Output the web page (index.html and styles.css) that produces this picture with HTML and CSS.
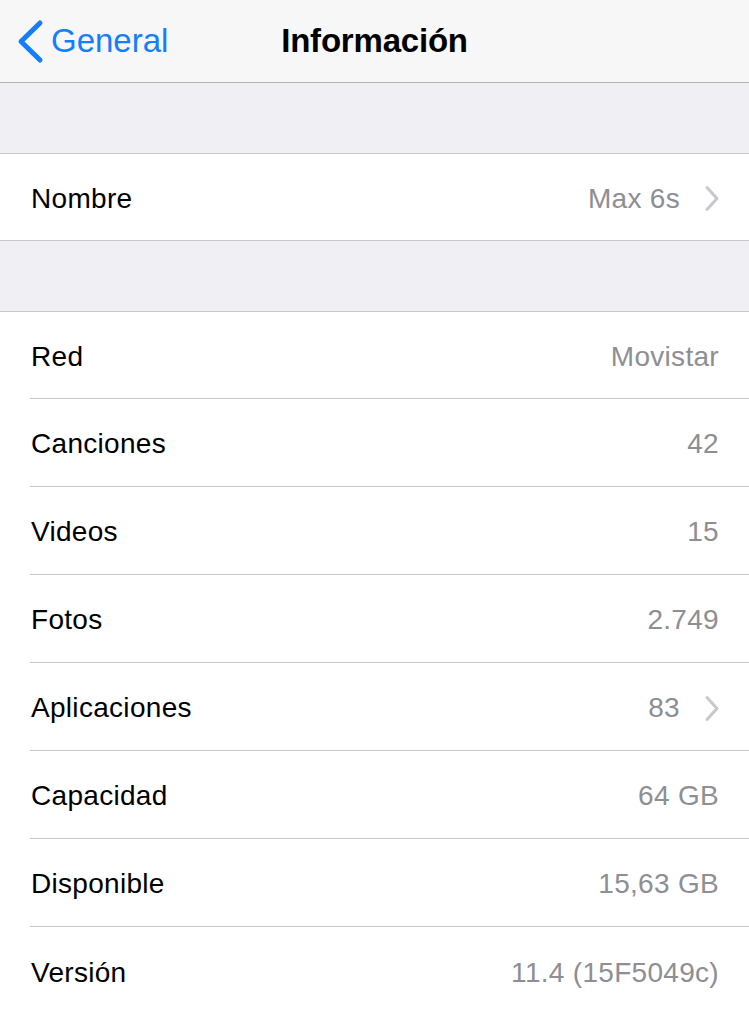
FILE: index.html
```html
<!DOCTYPE html>
<html lang="es">
<head>
<meta charset="utf-8">
<title>Información</title>
<link rel="stylesheet" href="styles.css">
</head>
<body>
<header class="nav">
  <a class="back">
    <svg class="back-icon" viewBox="0 0 28 45" width="28" height="45"><path d="M24 4 L5 22.5 L24 41" fill="none" stroke="#147efb" stroke-width="5" stroke-linecap="round" stroke-linejoin="round"/></svg>
    <span>General</span>
  </a>
  <h1 class="title">Información</h1>
  <div></div>
</header>
<div class="spacer"></div>
<section class="group">
  <div class="cell"><div class="inner"><span class="label">Nombre</span><span class="value">Max 6s<svg class="chev" viewBox="0 0 16 27" width="16" height="27"><path d="M3 2.5 L13 13.5 L3 24.5" fill="none" stroke="#c7c7cc" stroke-width="3" stroke-linecap="round" stroke-linejoin="round"/></svg></span></div></div>
</section>
<div class="spacer"></div>
<section class="group">
  <div class="cell"><div class="inner"><span class="label">Red</span><span class="value">Movistar</span></div></div>
  <div class="cell"><div class="inner"><span class="label">Canciones</span><span class="value">42</span></div></div>
  <div class="cell"><div class="inner"><span class="label">Videos</span><span class="value">15</span></div></div>
  <div class="cell"><div class="inner"><span class="label">Fotos</span><span class="value">2.749</span></div></div>
  <div class="cell"><div class="inner"><span class="label">Aplicaciones</span><span class="value">83<svg class="chev" viewBox="0 0 16 27" width="16" height="27"><path d="M3 2.5 L13 13.5 L3 24.5" fill="none" stroke="#c7c7cc" stroke-width="3" stroke-linecap="round" stroke-linejoin="round"/></svg></span></div></div>
  <div class="cell"><div class="inner"><span class="label">Capacidad</span><span class="value">64 GB</span></div></div>
  <div class="cell"><div class="inner"><span class="label">Disponible</span><span class="value">15,63 GB</span></div></div>
  <div class="cell"><div class="inner"><span class="label">Versión</span><span class="value">11.4 (15F5049c)</span></div></div>
</section>
</body>
</html>
```
FILE: styles.css
```css
html, body {
  margin: 0;
  padding: 0;
}
body {
  background: #efeff4;
  font-family: "Liberation Sans", Arial, sans-serif;
  color: #000;
}
.nav {
  height: 82px;
  background: #f7f7f8;
  border-bottom: 1px solid #b2b2b2;
  display: grid;
  grid-template-columns: 1fr auto 1fr;
  align-items: center;
}
.back {
  display: flex;
  align-items: center;
  gap: 7px;
  padding-left: 16px;
  color: #147efb;
  font-size: 33px;
}
.back-icon {
  display: block;
}
.title {
  margin: 0;
  font-size: 33px;
  font-weight: bold;
  letter-spacing: -0.2px;
}
.spacer {
  height: 70px;
}
.group {
  background: #fff;
  border-top: 1px solid #c8c7cc;
  border-bottom: 1px solid #c8c7cc;
}
.cell {
  padding-left: 30px;
}
.inner {
  box-sizing: border-box;
  height: 88px;
  display: flex;
  align-items: center;
  justify-content: space-between;
  padding: 3px 30px 0 1px;
  border-bottom: 1px solid #c8c7cc;
  font-size: 28px;
  letter-spacing: 0.3px;
}
.cell:first-child .inner {
  height: 87px;
}
.cell:last-child .inner {
  border-bottom: none;
}
.group .cell:only-child .inner {
  height: 86px;
}
.value {
  color: #8e8e93;
  display: flex;
  align-items: center;
}
.chev {
  display: block;
  margin-left: 24px;
  margin-right: -1px;
}
```
